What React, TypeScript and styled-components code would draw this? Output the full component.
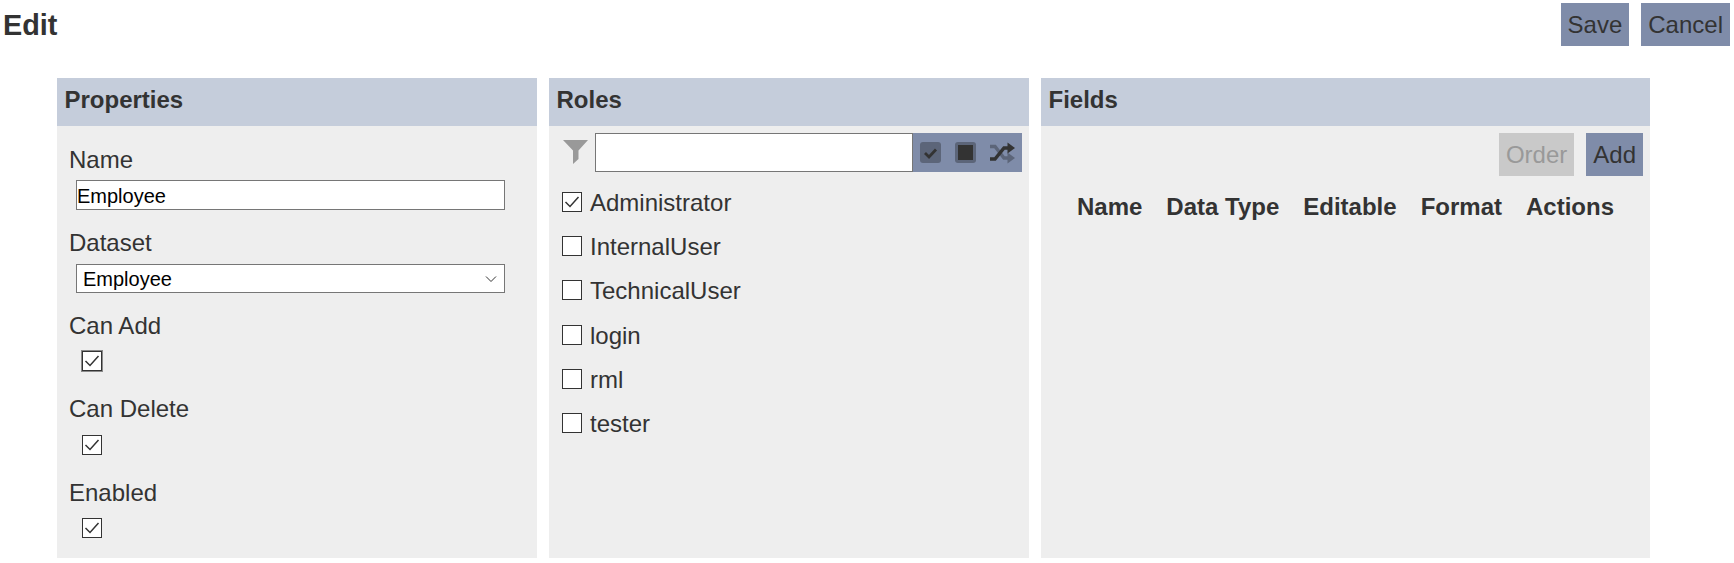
import React from "react";
import styled, { createGlobalStyle } from "styled-components";

const Global = createGlobalStyle`
  * { box-sizing: border-box; }
  html, body { margin: 0; padding: 0; background: #fff; }
  body { font-family: "Liberation Sans", Arial, sans-serif; font-size: 24px; color: #333; }
`;

const Page = styled.div`
  width: 1734px;
  height: 563px;
  overflow: hidden;
`;
const TopBar = styled.header`
  display: flex;
  align-items: flex-start;
  justify-content: space-between;
  height: 78px;
  padding: 3px 4px 0 3px;
`;
const Title = styled.h1`
  margin: 6px 0 0;
  font-size: 28.8px;
  line-height: 33px;
  font-weight: 700;
  color: #333;
`;
const Actions = styled.div`
  display: flex;
  gap: 12px;
`;
const Button = styled.button<{ $disabled?: boolean }>`
  height: 43px;
  padding: 0 7px;
  border: 0;
  border-radius: 0;
  font: inherit;
  background: ${(p) => (p.$disabled ? "#c9c9c9" : "#7f8ca9")};
  color: ${(p) => (p.$disabled ? "#999" : "#333")};
`;
const Columns = styled.main`
  display: grid;
  grid-template-columns: 480px 480px 609px;
  grid-template-rows: 480px;
  column-gap: 12px;
  padding-left: 57px;
`;
const Panel = styled.section`
  display: flex;
  flex-direction: column;
  min-height: 0;
  overflow: hidden;
  background: #eee;
`;
const PanelHeader = styled.h2`
  margin: 0;
  flex: none;
  height: 48px;
  padding: 8px 7.5px 0;
  background: #c5cddb;
  font-size: 24px;
  line-height: 28px;
  font-weight: 700;
`;
const PropsBody = styled.div`
  padding: 20px 12px 0;
`;
const Field = styled.div<{ $tall?: boolean }>`
  height: ${(p) => (p.$tall ? "84px" : "83px")};
`;
const Label = styled.div`
  height: 28px;
  line-height: 28px;
`;
const TextInput = styled.input`
  display: block;
  width: 429px;
  height: 30px;
  margin: 6px 0 0 7px;
  padding: 3px 0 0 0;
  border: 1px solid #767676;
  border-radius: 0;
  outline: 0;
  background: #fff;
  color: #000;
  font: 20px "Liberation Sans", Arial, sans-serif;
`;
const SelectBox = styled.div`
  display: flex;
  align-items: center;
  justify-content: space-between;
  width: 429px;
  height: 29px;
  margin: 7px 0 0 7px;
  padding: 1px 7px 0 6px;
  border: 1px solid #767676;
  background: #fff;
  color: #000;
  font-size: 20px;
`;
const CheckHolder = styled.div<{ $offset?: number }>`
  margin: ${(p) => p.$offset ?? 11}px 0 0 13px;
`;
const Box = styled.span<{ $focus?: boolean }>`
  display: flex;
  flex: none;
  align-items: center;
  justify-content: center;
  width: 20px;
  height: 20px;
  border: 1px solid #333;
  background: #fff;
  box-shadow: ${(p) => (p.$focus ? "0 0 0 1px #8a8a8a" : "none")};
`;
const FilterRow = styled.div`
  display: flex;
  flex: none;
  align-items: center;
  height: 39px;
  margin: 7px 7px 0 0;
  padding-left: 14px;
`;
const FilterIcon = styled.svg`
  flex: none;
  width: 25px;
  height: 25px;
  margin-right: 7px;
`;
const FilterInput = styled.input`
  flex: 1;
  min-width: 0;
  height: 39px;
  border: 1px solid #767676;
  border-radius: 0;
  outline: 0;
  background: #fff;
`;
const FilterTools = styled.div`
  display: flex;
  align-items: center;
  gap: 14px;
  flex: none;
  width: 109px;
  height: 39px;
  padding-left: 7px;
  background: #7f8ca9;
`;
const ToolIcon = styled.svg`
  flex: none;
  display: block;
`;
const RoleList = styled.ul`
  list-style: none;
  margin: 8px 0 0;
  padding: 0 0 0 13px;
`;
const RoleItem = styled.li`
  display: flex;
  align-items: center;
  gap: 8px;
  height: 44.2px;
`;
const RoleName = styled.span`
  padding-top: 2px;
`;
const FieldsToolbar = styled.div`
  display: flex;
  flex: none;
  justify-content: flex-end;
  gap: 12px;
  padding: 7px 7px 0 0;
`;
const FieldsTable = styled.table`
  margin: 9px auto 0;
  border-collapse: collapse;
`;
const HeadCell = styled.th`
  padding: 8px 12px;
  font-size: 24px;
  line-height: 28px;
  font-weight: 700;
  color: #333;
`;

const Tick = () => (
  <svg width="18" height="18" viewBox="0 0 18 18" aria-hidden="true">
    <path d="M2.5 9 L7 13.5 L15.5 4" fill="none" stroke="#333" strokeWidth="1.5" />
  </svg>
);

const Check = ({ checked, focus }: { checked?: boolean; focus?: boolean }) => (
  <Box $focus={focus}>{checked && <Tick />}</Box>
);

const roles = ["Administrator", "InternalUser", "TechnicalUser", "login", "rml", "tester"];
const columns = ["Name", "Data Type", "Editable", "Format", "Actions"];

export default function App() {
  return (
    <Page>
      <Global />
      <TopBar>
        <Title>Edit</Title>
        <Actions>
          <Button>Save</Button>
          <Button>Cancel</Button>
        </Actions>
      </TopBar>
      <Columns>
        <Panel>
          <PanelHeader>Properties</PanelHeader>
          <PropsBody>
            <Field>
              <Label>Name</Label>
              <TextInput defaultValue="Employee" />
            </Field>
            <Field>
              <Label>Dataset</Label>
              <SelectBox>
                <span>Employee</span>
                <svg width="12" height="8" viewBox="0 0 12 8" aria-hidden="true">
                  <path d="M1 1.5 L6 6.5 L11 1.5" fill="none" stroke="#333" strokeWidth="1" />
                </svg>
              </SelectBox>
            </Field>
            <Field>
              <Label>Can Add</Label>
              <CheckHolder><Check checked focus /></CheckHolder>
            </Field>
            <Field $tall>
              <Label>Can Delete</Label>
              <CheckHolder $offset={12}><Check checked /></CheckHolder>
            </Field>
            <Field>
              <Label>Enabled</Label>
              <CheckHolder><Check checked /></CheckHolder>
            </Field>
          </PropsBody>
        </Panel>
        <Panel>
          <PanelHeader>Roles</PanelHeader>
          <FilterRow>
            <FilterIcon viewBox="0 0 25 25" aria-hidden="true">
              <path d="M0 0 H25 L15.5 10.5 V19 L10 24 V10.5 Z" fill="#999" />
            </FilterIcon>
            <FilterInput />
            <FilterTools>
              <ToolIcon width="21" height="21" viewBox="0 0 21 21" aria-hidden="true">
                <rect width="21" height="21" rx="3" fill="#5c6579" />
                <path d="M5 11 L9 15 L16 7.5" fill="none" stroke="#333" strokeWidth="2.8" />
              </ToolIcon>
              <ToolIcon width="21" height="21" viewBox="0 0 21 21" aria-hidden="true">
                <rect width="21" height="21" rx="3" fill="#5c6579" />
                <rect x="3" y="3" width="15" height="15" fill="#333" />
              </ToolIcon>
              <ToolIcon width="25" height="22" viewBox="0 0 25 22" aria-hidden="true">
                <path d="M0 4.5 H5 L14 16 H19" fill="none" stroke="#5c6579" strokeWidth="3.4" />
                <path d="M17.5 10.5 L25 16 L17.5 21.5 Z" fill="#5c6579" />
                <path d="M0 17 H5 L14 6 H19" fill="none" stroke="#333" strokeWidth="3.4" />
                <path d="M17.5 0.5 L25 6 L17.5 11.5 Z" fill="#333" />
              </ToolIcon>
            </FilterTools>
          </FilterRow>
          <RoleList>
            {roles.map((r, i) => (
              <RoleItem key={r}>
                <Check checked={i === 0} />
                <RoleName>{r}</RoleName>
              </RoleItem>
            ))}
          </RoleList>
        </Panel>
        <Panel>
          <PanelHeader>Fields</PanelHeader>
          <FieldsToolbar>
            <Button $disabled>Order</Button>
            <Button>Add</Button>
          </FieldsToolbar>
          <FieldsTable>
            <thead>
              <tr>
                {columns.map((c) => (
                  <HeadCell key={c}>{c}</HeadCell>
                ))}
              </tr>
            </thead>
          </FieldsTable>
        </Panel>
      </Columns>
    </Page>
  );
}
